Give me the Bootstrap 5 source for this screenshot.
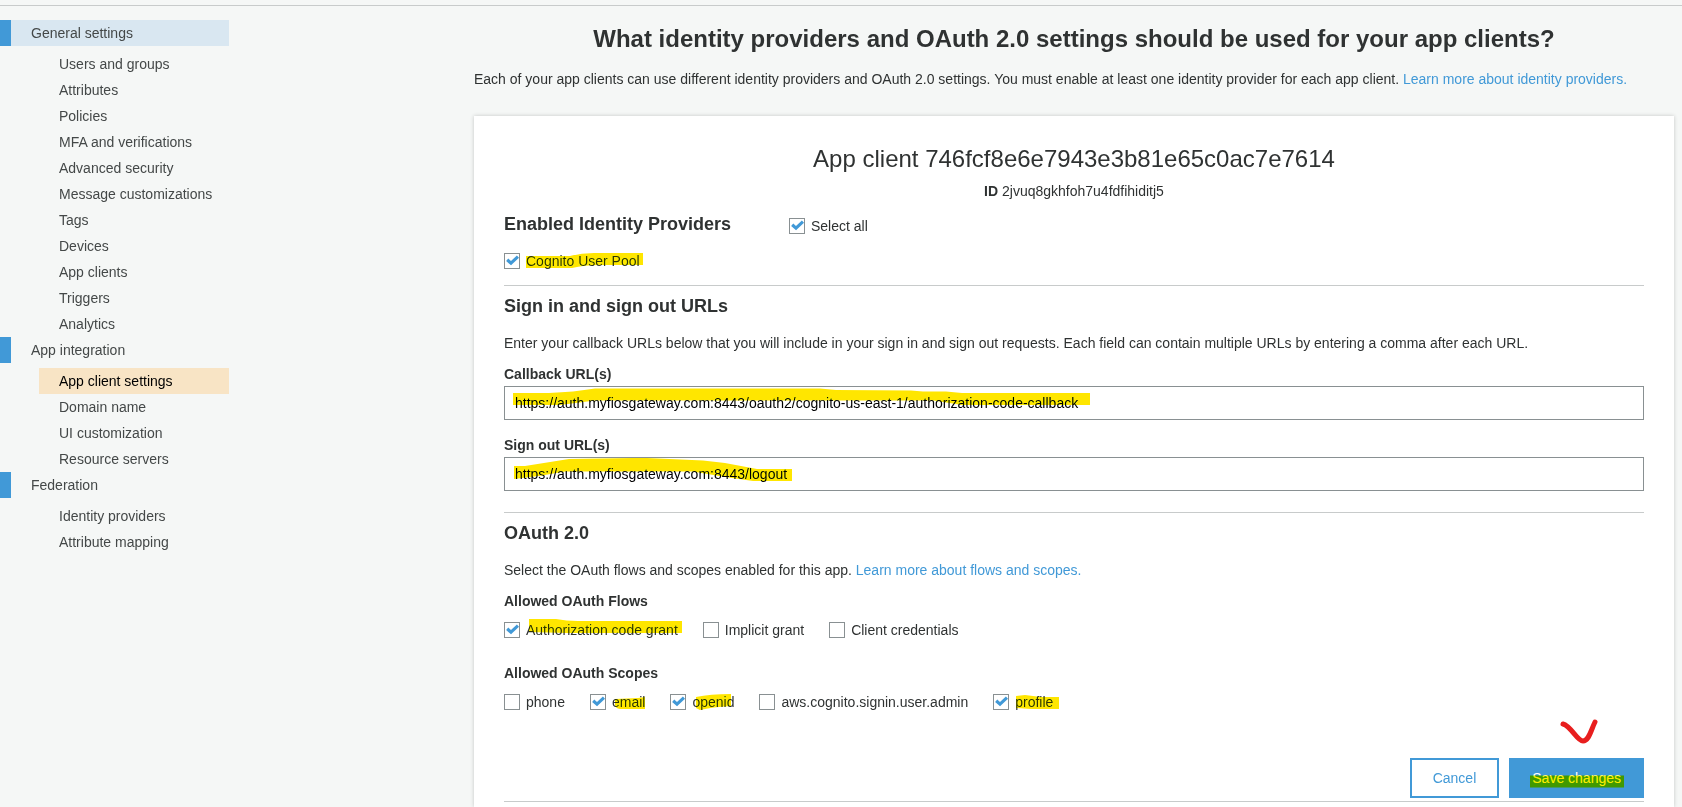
<!DOCTYPE html>
<html lang="en">
<head>
<meta charset="utf-8">
<meta name="viewport" content="width=device-width, initial-scale=1">
<title>App client settings</title>
<link href="https://cdn.jsdelivr.net/npm/bootstrap@5.3.0/dist/css/bootstrap.min.css" rel="stylesheet">
<style>
  :root { --blue: #4199d7; --rule: #c8cbcb; --field: #899092; }
  body { background: #f5f7f6; color: #2f3232; font: 14px/20px "Liberation Sans", Arial, sans-serif; }
  a { color: var(--blue); text-decoration: none; }
  h1, h2, h3, h4, p, hr { margin: 0; }
  hr { border-top: 1px solid var(--rule); opacity: 1; }
  h1 { font-size: 24px; line-height: 30px; font-weight: 700; }
  h2 { font-size: 24px; line-height: 30px; font-weight: 400; }
  h3 { font-size: 18px; line-height: 22px; font-weight: 700; }
  h4, .field-label { font-size: 14px; line-height: 20px; font-weight: 700; }

  .top-rule { margin-top: 5px; }
  .side { flex: 0 0 474px; padding-top: 14px; }
  .side nav { width: 229px; }
  .side a { display: block; line-height: 26px; color: #444848; }
  .side .section-link { border-left: 11px solid var(--blue); padding-left: 20px; }
  .side .section-link.open { background: #d9e7f1; }
  .side ul { padding: 5px 0 0 39px; }
  .side ul a { padding-left: 20px; }
  .side ul a.current { background: #f8e4c5; color: #000; }

  .content-col { padding: 18px 8px 0 0; }
  .intro { margin: 15px 0 27px; }
  .panel { background: #fff; padding: 28px 30px 0; box-shadow: 0 0 4px rgba(0, 0, 0, .2); }
  .client-id { margin-top: 7px; }
  .providers-head { margin-top: 12px; }
  .providers-head .tick { padding-top: 3px; }
  .providers { margin: 15px 0 14px; }
  .section-title { margin-top: 9px; }
  .sub-title { margin-top: 11px; }
  .field-label { display: block; margin: 15px 0 2px; }
  .field-label.sub-title { margin-top: 11px; }
  .section-end { margin-top: 21px; }
  .scopes-title { margin-top: 23px; }
  .options { margin-top: 9px; }
  .actions { gap: 10px; margin: 46px 0 3px; }

  .tick { display: flex; align-items: center; gap: 6px; }
  .tick .form-check-input { width: 16px; height: 16px; margin: 0; border: 1px solid var(--field); border-radius: 0; background-color: #fff; }
  .tick .form-check-input:checked { background-color: #fff; background-size: 14px 14px;
    background-image: url("data:image/svg+xml,%3csvg xmlns='http://www.w3.org/2000/svg' viewBox='0 0 14 14'%3e%3cpath d='M2.200 5.800L6 9.200L13 2.600' fill='none' stroke='%234199d7' stroke-width='3.200'/%3e%3c/svg%3e"); }
  .choices { display: flex; flex-wrap: wrap; column-gap: 25px; }

  .field { height: 34px; padding: 0 10px; border: 1px solid var(--field); border-radius: 0; font-size: 14px; color: #000; background: #fff; }
  .btn-flat { height: 40px; padding: 0 21px; border: 2px solid var(--blue); border-radius: 0; font-size: 14px; }
  .btn-line { color: var(--blue); background: #fff; }
  .btn-solid { color: #fff; background: var(--blue); }

  .marked { position: relative; }
  .pen { position: absolute; left: 0; top: 0; width: 1px; height: 1px; overflow: visible; pointer-events: none; fill: #ffe600; mix-blend-mode: darken; }
  .red-check { position: absolute; right: 42px; bottom: 50px; width: 42px; height: 28px; }
</style>
</head>
<body class="d-flex flex-column min-vh-100">
<hr class="top-rule">
<div class="d-flex flex-grow-1">
  <aside class="side">
    <nav aria-label="User pool settings">
      <a href="#" class="section-link open">General settings</a>
      <ul class="list-unstyled m-0">
        <li><a href="#">Users and groups</a></li>
        <li><a href="#">Attributes</a></li>
        <li><a href="#">Policies</a></li>
        <li><a href="#">MFA and verifications</a></li>
        <li><a href="#">Advanced security</a></li>
        <li><a href="#">Message customizations</a></li>
        <li><a href="#">Tags</a></li>
        <li><a href="#">Devices</a></li>
        <li><a href="#">App clients</a></li>
        <li><a href="#">Triggers</a></li>
        <li><a href="#">Analytics</a></li>
      </ul>
      <a href="#" class="section-link">App integration</a>
      <ul class="list-unstyled m-0">
        <li><a href="#" class="current" aria-current="page">App client settings</a></li>
        <li><a href="#">Domain name</a></li>
        <li><a href="#">UI customization</a></li>
        <li><a href="#">Resource servers</a></li>
      </ul>
      <a href="#" class="section-link">Federation</a>
      <ul class="list-unstyled m-0">
        <li><a href="#">Identity providers</a></li>
        <li><a href="#">Attribute mapping</a></li>
      </ul>
    </nav>
  </aside>

  <main class="content-col flex-grow-1 d-flex flex-column">
    <h1 class="text-center">What identity providers and OAuth 2.0 settings should be used for your app clients?</h1>
    <p class="intro">Each of your app clients can use different identity providers and OAuth 2.0 settings. You must enable at least one identity provider for each app client. <a href="#">Learn more about identity providers.</a></p>

    <form class="panel flex-grow-1">
      <h2 class="text-center">App client 746fcf8e6e7943e3b81e65c0ac7e7614</h2>
      <p class="text-center client-id"><b>ID</b> 2jvuq8gkhfoh7u4fdfihiditj5</p>

      <div class="row g-0 providers-head">
        <h3 class="col-3">Enabled Identity Providers</h3>
        <div class="col d-flex">
          <label class="tick"><input class="form-check-input" type="checkbox" checked>Select all</label>
        </div>
      </div>
      <div class="choices providers">
        <label class="tick"><input class="form-check-input" type="checkbox" checked><span class="marked">Cognito User Pool<svg class="pen" aria-hidden="true"><path d="M0 5H44Q56 2 68 2H117V14H74Q58 14 46 17H0Z"/></svg></span></label>
      </div>
      <hr>

      <h3 class="section-title">Sign in and sign out URLs</h3>
      <p class="mt-3">Enter your callback URLs below that you will include in your sign in and sign out requests. Each field can contain multiple URLs by entering a comma after each URL.</p>
      <label class="field-label sub-title" for="callback">Callback URL(s)</label>
      <div class="marked">
        <input class="form-control field" id="callback" type="text" value="https://auth.myfiosgateway.com:8443/oauth2/cognito-us-east-1/authorization-code-callback">
        <svg class="pen" aria-hidden="true"><path d="M9 7H45Q70 6 91 2.500H316L332 4L407 4.500L419 5.500H442L458 7H586V19H458L430 14.500H91L56 19H9Z"/></svg>
      </div>
      <label class="field-label" for="signout">Sign out URL(s)</label>
      <div class="marked">
        <input class="form-control field" id="signout" type="text" value="https://auth.myfiosgateway.com:8443/logout">
        <svg class="pen" aria-hidden="true"><path d="M10 9H21L65 2L128 1H143L199 3.500L221 6L253 12H288V24H249L221 20L189 14.500H61L35 19L10 22Z"/></svg>
      </div>
      <hr class="section-end">

      <h3 class="section-title">OAuth 2.0</h3>
      <p class="mt-3">Select the OAuth flows and scopes enabled for this app. <a href="#">Learn more about flows and scopes.</a></p>
      <h4 class="sub-title">Allowed OAuth Flows</h4>
      <div class="choices options">
        <label class="tick"><input class="form-check-input" type="checkbox" checked><span class="marked">Authorization code grant<svg class="pen" aria-hidden="true"><path d="M3 -1H30Q40 1 52 1H156V13H40L3 12Z"/></svg></span></label>
        <label class="tick"><input class="form-check-input" type="checkbox">Implicit grant</label>
        <label class="tick"><input class="form-check-input" type="checkbox">Client credentials</label>
      </div>
      <h4 class="scopes-title">Allowed OAuth Scopes</h4>
      <div class="choices options">
        <label class="tick"><input class="form-check-input" type="checkbox">phone</label>
        <label class="tick"><input class="form-check-input" type="checkbox" checked><span class="marked">email<svg class="pen" aria-hidden="true"><path d="M3 7L26 6L33 5V17H8Q3 16 3 13Z"/></svg></span></label>
        <label class="tick"><input class="form-check-input" type="checkbox" checked><span class="marked">openid<svg class="pen" aria-hidden="true"><path d="M4 5Q18 2 39 2V14Q20 15 8 18L4 16Z"/></svg></span></label>
        <label class="tick"><input class="form-check-input" type="checkbox">aws.cognito.signin.user.admin</label>
        <label class="tick"><input class="form-check-input" type="checkbox" checked><span class="marked">profile<svg class="pen" aria-hidden="true"><path d="M1 4L10 3L26 5H44V17H16L1 16Z"/></svg></span></label>
      </div>

      <div class="d-flex justify-content-end actions">
        <button type="button" class="btn btn-flat btn-line">Cancel</button>
        <button type="submit" class="btn btn-flat btn-solid marked">Save changes<svg class="pen" aria-hidden="true"><path d="M19 15.500H113V27.500H19Z"/></svg><svg class="red-check" viewBox="0 0 42 28" aria-hidden="true"><path d="M5 6C13 8 19 23 25 23C31 23 33 12 37 4" fill="none" stroke="#e81e1e" stroke-width="5" stroke-linecap="round"/></svg></button>
      </div>
      <hr>
    </form>
  </main>
</div>
<script src="https://cdn.jsdelivr.net/npm/bootstrap@5.3.0/dist/js/bootstrap.bundle.min.js"></script>
</body>
</html>
